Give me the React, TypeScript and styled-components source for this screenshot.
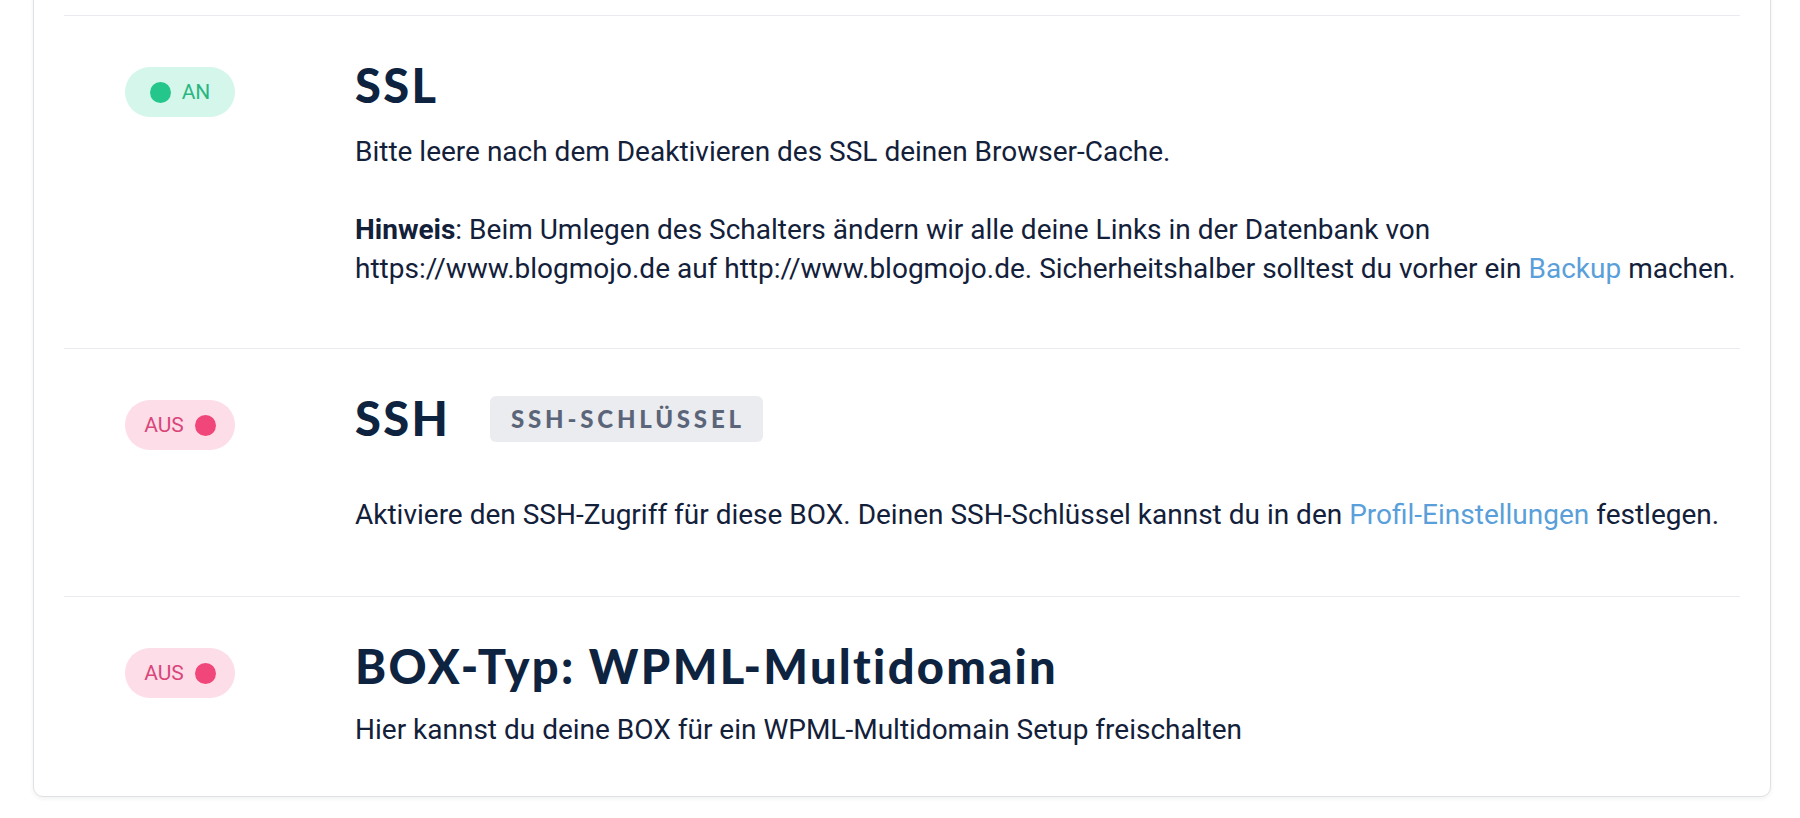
import React from "react";
import styled, { createGlobalStyle } from "styled-components";

const Global = createGlobalStyle`
  html, body { margin: 0; padding: 0; background: #ffffff; }
  body { font-family: Roboto, "Liberation Sans", sans-serif; overflow: hidden; }
  * { box-sizing: border-box; }
`;

const Page = styled.div`
  width: 1800px;
  height: 818px;
  padding: 0 29px 0 33px;
  overflow: hidden;
`;

const Card = styled.div`
  margin-top: -20px;
  background: #ffffff;
  border: 1px solid #dfe1e5;
  border-radius: 10px;
  box-shadow: 0 2px 4px rgba(20, 30, 50, 0.06);
  padding: 34px 30px 0;
`;

const Section = styled.section<{ $pb: number }>`
  display: grid;
  grid-template-columns: 230px 1fr;
  align-items: start;
  border-top: 1px solid #e9ebee;
  padding: 43px 0 ${(p) => p.$pb}px 61px;
`;

const Pill = styled.div<{ $on: boolean }>`
  margin-top: 8px;
  width: 110px;
  height: 50px;
  border-radius: 25px;
  display: flex;
  align-items: center;
  justify-content: center;
  gap: 11px;
  background: ${(p) => (p.$on ? "#d5f6ea" : "#fddde7")};
  color: ${(p) => (p.$on ? "#2ab683" : "#d9467a")};
  font-family: Roboto, "Liberation Sans", sans-serif;
  font-size: 21px;
  line-height: 1;
`;

const Dot = styled.span<{ $on: boolean }>`
  width: 21px;
  height: 21px;
  border-radius: 50%;
  background: ${(p) => (p.$on ? "#24c68b" : "#f0467a")};
  flex: none;
`;

const Content = styled.div`
  min-width: 0;
`;

const Header = styled.div<{ $gap: number }>`
  display: flex;
  align-items: center;
  gap: 40px;
  margin-bottom: ${(p) => p.$gap}px;
`;

const Title = styled.h2`
  margin: 0;
  font-family: Lato, "Open Sans", sans-serif;
  font-weight: 900;
  font-size: 47px;
  line-height: 53px;
  color: #0e2340;
  letter-spacing: 2.3px;
`;

const Badge = styled.span`
  display: inline-flex;
  align-items: center;
  height: 46px;
  padding: 0 18px 0 21px;
  border-radius: 6px;
  background: #ebecef;
  color: #5b6579;
  font-family: Lato, "Open Sans", sans-serif;
  font-weight: 900;
  font-size: 24px;
  letter-spacing: 3.8px;
  text-transform: uppercase;
`;

const Text = styled.p<{ $mt?: number }>`
  margin: ${(p) => p.$mt ?? 0}px 0 0;
  font-family: Roboto, "Liberation Sans", sans-serif;
  font-size: 28px;
  line-height: 39px;
  color: #13203a;
  white-space: nowrap;
`;

const Link = styled.a`
  color: #5a9fd9;
  text-decoration: none;
`;

export default function App() {
  return (
    <>
      <Global />
      <Page>
        <Card>
          <Section $pb={60}>
            <Pill $on>
              <Dot $on />
              <span>AN</span>
            </Pill>
            <Content>
              <Header $gap={20}>
                <Title>SSL</Title>
              </Header>
              <Text>Bitte leere nach dem Deaktivieren des SSL deinen Browser-Cache.</Text>
              <Text $mt={39}>
                <strong>Hinweis</strong>: Beim Umlegen des Schalters ändern wir alle deine Links in der Datenbank von
                <br />
                https://www.blogmojo.de auf http://www.blogmojo.de. Sicherheitshalber solltest du vorher ein{" "}
                <Link href="#">Backup</Link> machen.
              </Text>
            </Content>
          </Section>
          <Section $pb={62}>
            <Pill $on={false}>
              <span>AUS</span>
              <Dot $on={false} />
            </Pill>
            <Content>
              <Header $gap={50}>
                <Title>SSH</Title>
                <Badge>SSH-Schlüssel</Badge>
              </Header>
              <Text>
                Aktiviere den SSH-Zugriff für diese BOX. Deinen SSH-Schlüssel kannst du in den{" "}
                <Link href="#">Profil-Einstellungen</Link> festlegen.
              </Text>
            </Content>
          </Section>
          <Section $pb={47}>
            <Pill $on={false}>
              <span>AUS</span>
              <Dot $on={false} />
            </Pill>
            <Content>
              <Header $gap={17}>
                <Title>BOX-Typ: WPML-Multidomain</Title>
              </Header>
              <Text>Hier kannst du deine BOX für ein WPML-Multidomain Setup freischalten</Text>
            </Content>
          </Section>
        </Card>
      </Page>
    </>
  );
}
